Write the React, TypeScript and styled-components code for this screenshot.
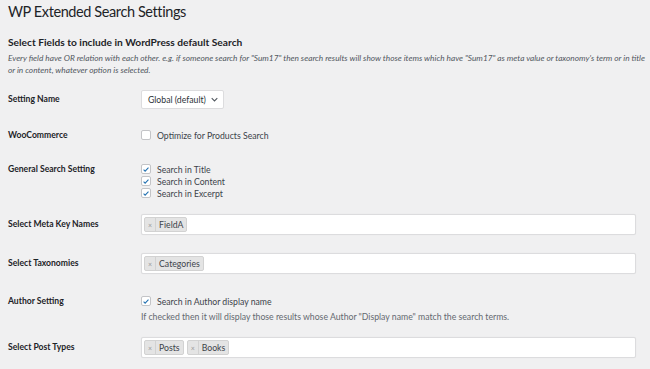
import React from 'react';
import styled, { createGlobalStyle } from 'styled-components';

const GlobalStyle = createGlobalStyle`
  html, body {
    margin: 0;
    padding: 0;
    background: #f0f0f1;
  }
  body {
    font-family: Lato, "Open Sans", "Liberation Sans", sans-serif;
    color: #1d2327;
    -webkit-font-smoothing: antialiased;
  }
`;

const Page = styled('div')`
  width: 650px;
  height: 369px;
  overflow: hidden;
  padding: 0 14px 0 8px;
  box-sizing: border-box;
`;

const Title = styled('h1')`
  margin: 0;
  padding-top: 2px;
  font-size: 14.5px;
  letter-spacing: -0.4px;
  line-height: 20px;
  font-weight: 400;
  color: #1d2327;
`;

const SectionTitle = styled('h2')`
  margin: 12px 0 0;
  font-size: 10.2px;
  line-height: 16px;
  font-weight: 700;
  color: #1d2327;
`;

const Description = styled('p')`
  margin: 2px -10px 0 0;
  font-size: 8.3px;
  line-height: 12px;
  font-style: italic;
  color: #50575e;
`;

const Form = styled('div')`
  display: flex;
  flex-direction: column;
  margin-top: 14px;
`;

const Row = styled('div')<{ $gap: number }>`
  display: grid;
  grid-template-columns: 133px 1fr;
  align-items: start;
  margin-bottom: ${(p) => p.$gap}px;
`;

const Label = styled('div')<{ $h: number }>`
  font-size: 8.6px;
  font-weight: 700;
  line-height: ${(p) => p.$h}px;
  color: #1d2327;
`;

const Field = styled('div')`
  display: flex;
  flex-direction: column;
  min-width: 0;
`;

const Select = styled('div')`
  display: inline-flex;
  align-items: center;
  align-self: flex-start;
  gap: 5px;
  height: 19px;
  box-sizing: border-box;
  padding: 0 5px 0 6px;
  background: #fff;
  border: 1px solid #dcdcde;
  border-radius: 2px;
  font-size: 8.7px;
  color: #2c3338;
`;

const CheckLine = styled('label')`
  display: flex;
  align-items: center;
  gap: 6px;
  height: 12px;
  font-size: 8.7px;
  color: #3c434a;
`;

const Box = styled('span')`
  display: inline-flex;
  align-items: center;
  justify-content: center;
  width: 10px;
  height: 10px;
  box-sizing: border-box;
  background: #fff;
  border: 1px solid #c3c4c7;
  border-radius: 2px;
`;

const Help = styled('div')`
  margin-top: 4px;
  font-size: 8.7px;
  line-height: 12px;
  color: #646970;
`;

const TagInput = styled('div')`
  display: flex;
  align-items: center;
  gap: 3px;
  height: 21px;
  box-sizing: border-box;
  padding: 0 2px;
  background: #fff;
  border: 1px solid #dcdcde;
  border-radius: 2px;
  box-shadow: 0 0 1px rgba(0, 0, 0, 0.08);
`;

const Tag = styled('span')`
  display: inline-flex;
  align-items: stretch;
  height: 15px;
  box-sizing: border-box;
  background: #e4e4e4;
  border: 1px solid #d2d2d2;
  border-radius: 2px;
  font-size: 8.7px;
  color: #3c434a;
`;

const TagRemove = styled('span')`
  display: flex;
  align-items: center;
  padding: 0 3px;
  font-size: 7px;
  color: #999;
  border-right: 1px solid #d2d2d2;
`;

const TagText = styled('span')`
  display: flex;
  align-items: center;
  padding: 0 3px 0 3px;
`;

const Check = ({ checked, children }: { checked?: boolean; children: React.ReactNode }) => (
  <CheckLine>
    <Box>
      {checked && (
        <svg width="9" height="9" viewBox="0 0 20 20">
          <path d="M4 10.5l3.8 3.8L16.2 5.2" fill="none" stroke="#2271b1" strokeWidth="2.6" />
        </svg>
      )}
    </Box>
    {children}
  </CheckLine>
);

const Tags = ({ items }: { items: string[] }) => (
  <TagInput>
    {items.map((t) => (
      <Tag key={t}>
        <TagRemove>×</TagRemove>
        <TagText>{t}</TagText>
      </Tag>
    ))}
  </TagInput>
);

export default function App() {
  return (
    <>
      <GlobalStyle />
      <Page>
        <Title>WP Extended Search Settings</Title>
        <SectionTitle>Select Fields to include in WordPress default Search</SectionTitle>
        <Description>
          Every field have OR relation with each other. e.g. if someone search for "Sum17" then search results
          will show those items which have "Sum17" as meta value or taxonomy's term or in title or in content,
          whatever option is selected.
        </Description>

        <Form>
          <Row $gap={20}>
            <Label $h={19}>Setting Name</Label>
            <Field>
              <Select>
                Global (default)
                <svg width="7" height="5" viewBox="0 0 10 6">
                  <path d="M1 1l4 4 4-4" fill="none" stroke="#50575e" strokeWidth="1.5" />
                </svg>
              </Select>
            </Field>
          </Row>

          <Row $gap={22}>
            <Label $h={12}>WooCommerce</Label>
            <Field>
              <Check>Optimize for Products Search</Check>
            </Field>
          </Row>

          <Row $gap={15}>
            <Label $h={12}>General Search Setting</Label>
            <Field>
              <Check checked>Search in Title</Check>
              <Check checked>Search in Content</Check>
              <Check checked>Search in Excerpt</Check>
            </Field>
          </Row>

          <Row $gap={18}>
            <Label $h={21}>Select Meta Key Names</Label>
            <Field>
              <Tags items={['FieldA']} />
            </Field>
          </Row>

          <Row $gap={21}>
            <Label $h={21}>Select Taxonomies</Label>
            <Field>
              <Tags items={['Categories']} />
            </Field>
          </Row>

          <Row $gap={14}>
            <Label $h={12}>Author Setting</Label>
            <Field>
              <Check checked>Search in Author display name</Check>
              <Help>If checked then it will display those results whose Author "Display name" match the search terms.</Help>
            </Field>
          </Row>

          <Row $gap={0}>
            <Label $h={21}>Select Post Types</Label>
            <Field>
              <Tags items={['Posts', 'Books']} />
            </Field>
          </Row>
        </Form>
      </Page>
    </>
  );
}
